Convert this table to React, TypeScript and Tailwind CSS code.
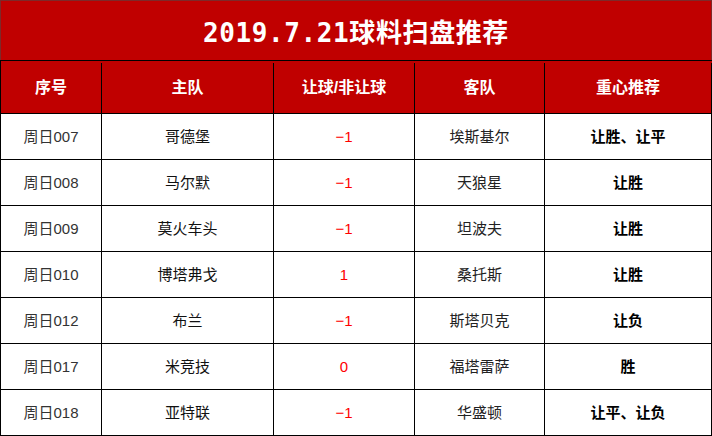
import React from 'react';

type Match = {
  no: string;
  home: string;
  handicap: string;
  away: string;
  pick: string;
};

const matches: Match[] = [
  { no: '周日007', home: '哥德堡', handicap: '−1', away: '埃斯基尔', pick: '让胜、让平' },
  { no: '周日008', home: '马尔默', handicap: '−1', away: '天狼星', pick: '让胜' },
  { no: '周日009', home: '莫火车头', handicap: '−1', away: '坦波夫', pick: '让胜' },
  { no: '周日010', home: '博塔弗戈', handicap: '1', away: '桑托斯', pick: '让胜' },
  { no: '周日012', home: '布兰', handicap: '−1', away: '斯塔贝克', pick: '让负' },
  { no: '周日017', home: '米竞技', handicap: '0', away: '福塔雷萨', pick: '胜' },
  { no: '周日018', home: '亚特联', handicap: '−1', away: '华盛顿', pick: '让平、让负' },
];

const cjk = { fontFamily: '"Liberation Sans", "Noto Sans CJK SC", sans-serif' };

export default function App() {
  return (
    <div className="w-[712px] h-[436px] bg-white overflow-hidden" style={cjk}>
      <div className="h-[60px] bg-[#c00000] border-t border-x border-[#7d2a2a] flex items-center justify-center">
        <h1
          className="text-white text-[26px] font-bold tracking-[0.6px] leading-none pt-[4px]"
          style={{ fontFamily: '"DejaVu Sans Mono", "Noto Sans CJK SC", monospace' }}
        >
          2019.7.21球料扫盘推荐
        </h1>
      </div>

      <div className="border-l border-black">
        <div className="flex h-[54px] pt-[2px] bg-[#c00000] border-y border-black text-white text-[16px] font-bold">
          <div className="w-[101px] border-r border-black flex items-center justify-center">序号</div>
          <div className="w-[172px] border-r border-black flex items-center justify-center">主队</div>
          <div className="w-[141px] border-r border-black flex items-center justify-center">让球/非让球</div>
          <div className="w-[130px] border-r border-black flex items-center justify-center">客队</div>
          <div className="w-[167px] border-r border-black flex items-center justify-center">重心推荐</div>
        </div>

        {matches.map((m) => (
          <div key={m.no} className="flex h-[46px] border-b border-black text-[15px]">
            <div className="w-[101px] pt-[2px] border-r border-black flex items-center justify-center text-[#333]">{m.no}</div>
            <div className="w-[172px] pt-[2px] border-r border-black flex items-center justify-center text-[#111]">{m.home}</div>
            <div className="w-[141px] pt-[2px] border-r border-black flex items-center justify-center text-[#ff0000]">{m.handicap}</div>
            <div className="w-[130px] pt-[2px] border-r border-black flex items-center justify-center text-[#222]">{m.away}</div>
            <div className="w-[167px] pt-[2px] border-r border-black flex items-center justify-center font-bold text-black">{m.pick}</div>
          </div>
        ))}
      </div>
    </div>
  );
}
